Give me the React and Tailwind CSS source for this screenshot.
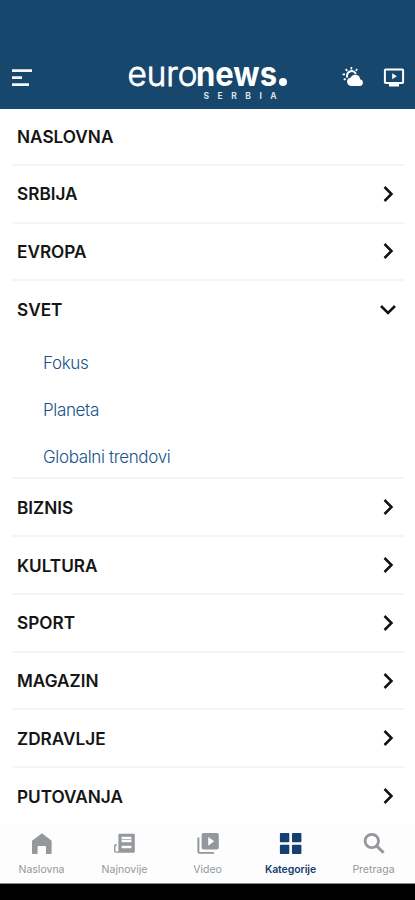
import React, { useState } from 'react';

const CATEGORIES = [
  { label: 'NASLOVNA' },
  { label: 'SRBIJA', children: [] },
  { label: 'EVROPA', children: [] },
  {
    label: 'SVET',
    children: ['Fokus', 'Planeta', 'Globalni trendovi'],
  },
  { label: 'BIZNIS', children: [] },
  { label: 'KULTURA', children: [] },
  { label: 'SPORT', children: [] },
  { label: 'MAGAZIN', children: [] },
  { label: 'ZDRAVLJE', children: [] },
  { label: 'PUTOVANJA', children: [] },
];

function MenuIcon() {
  return (
    <svg width="22" height="20" viewBox="0 0 22 20" fill="none" stroke="#f4f7ff" strokeWidth="2.6">
      <path d="M1 2.6h20M1 9.6h10M1 16.6h17" />
    </svg>
  );
}

function Logo() {
  return (
    <svg width="164" height="54" viewBox="0 -12 164 54" fill="#fff" className="font-[Inter,sans-serif]">
      <text x="0.5" y="26.6" fontSize="33.5" fontWeight="300" stroke="#fff" strokeWidth="0.8" textLength="70" lengthAdjust="spacingAndGlyphs">euro</text>
      <text x="69" y="26.6" fontSize="33.5" fontWeight="700" textLength="81" lengthAdjust="spacingAndGlyphs">news</text>
      <circle cx="156" cy="23" r="4" />
      <text x="76.5" y="39.8" fontSize="8.5" fontWeight="700" letterSpacing="8.5" fillOpacity="0.85">SERBIA</text>
    </svg>
  );
}

function WeatherIcon() {
  return (
    <svg width="24" height="22" viewBox="0 0 24 22" fill="none">
      <path d="M6.4 11.6a4.5 4.5 0 0 1 8.4-3.8" stroke="#fff" strokeWidth="2" />
      <path d="M10.4 1v2.4M4.6 3.2l1.7 1.7M16.2 3l-1.5 1.7M1.6 8.4H4M2.8 13.8l1.9-1.1" stroke="#fff" strokeWidth="1.7" />
      <path d="M10 20a4.2 4.2 0 0 1-.6-8.3 5.2 5.2 0 0 1 9.8 1.5 3.5 3.5 0 0 1 .2 6.8z" fill="#fff" />
    </svg>
  );
}

function TvIcon() {
  return (
    <svg width="22" height="20" viewBox="0 0 22 20" fill="none">
      <rect x="1.9" y="1.4" width="18.2" height="13.6" rx="0.8" stroke="#fff" strokeWidth="2" />
      <path d="M6 16h10v2.4H6zM9.2 5.2l4.6 3-4.6 3z" fill="#fff" />
    </svg>
  );
}

function Chevron({ open }) {
  return (
    <svg width="18" height="18" viewBox="0 0 18 18" fill="none" stroke="#111" strokeWidth="2.5">
      <path d={open ? 'M2 6l7 7 7-7' : 'M5.5 2l7 7-7 7'} />
    </svg>
  );
}

function HomeIcon() {
  return (
    <svg width="24" height="24" viewBox="0 0 24 24" fill="currentColor">
      <path d="M12 1.2 2 8.8v12.4q0 .8.8.8h4.8v-7.2q0-.8.8-.8h6.8q.8 0 .8.8V22h4.8q.8 0 .8-.8V8.8z" />
    </svg>
  );
}

function NewsIcon() {
  return (
    <svg width="24" height="24" viewBox="0 0 24 24" fill="none" stroke="currentColor">
      <path fill="currentColor" stroke="none" fillRule="evenodd" d="M6.4 1.8h14.4q1 0 1 1v17q0 1-1 1H6.4q-1 0-1-1v-17q0-1 1-1zm2.2 3v5.4h9.8V4.800zm0 8.900v2.600h9.800v-2.600z" />
      <path d="M8.600 7.500h9.800" strokeWidth="0.7" />
      <path d="M2.800 12v1.500H1.800v5.400q0 1.200 1.200 1.200h3" strokeWidth="1.4" />
    </svg>
  );
}

function VideoIcon() {
  return (
    <svg width="24" height="24" viewBox="0 0 24 24" fill="currentColor">
      <path fillRule="evenodd" d="M7.6 1h13.2q2 0 2 2v12.6q0 2-2 2H7.6q-2 0-2-2V3q0-2 2-2zm4.6 3.9v8.8l6-4.4z" />
      <path d="M1.4 5.4v14.4q0 2 2 2H18v-1.9H3.4V5.4z" />
    </svg>
  );
}

function GridIcon() {
  return (
    <svg width="24" height="24" viewBox="0 0 24 24" fill="currentColor">
      <rect x="0.9" y="1" width="9.4" height="9.2" rx="0.8" />
      <rect x="13" y="1" width="9.4" height="9.2" rx="0.8" />
      <rect x="0.9" y="12.8" width="9.4" height="9.2" rx="0.8" />
      <rect x="13" y="12.8" width="9.4" height="9.2" rx="0.8" />
    </svg>
  );
}

function SearchIcon() {
  return (
    <svg width="24" height="24" viewBox="0 0 24 24" fill="none" stroke="currentColor" strokeWidth="2.8">
      <circle cx="9.8" cy="9" r="6.7" />
      <path d="M14.4 13.6l7.2 7.2" strokeWidth="3" />
    </svg>
  );
}

const TABS = [
  { label: 'Naslovna', icon: HomeIcon },
  { label: 'Najnovije', icon: NewsIcon },
  { label: 'Video', icon: VideoIcon },
  { label: 'Kategorije', icon: GridIcon },
  { label: 'Pretraga', icon: SearchIcon },
];

export default function App() {
  const [open, setOpen] = useState('SVET');
  const [tab, setTab] = useState('Kategorije');

  return (
    <div className="flex h-[900px] w-full flex-col overflow-hidden bg-black font-[Inter,sans-serif]">
      {/* Header */}
      <header className="flex h-[109px] shrink-0 items-end bg-[#17476d] pr-[10px] pb-[8px] pl-[11px]">
        <button className="mb-[13px]"><MenuIcon /></button>
        <div className="ml-[94px]"><Logo /></div>
        <div className="mb-[13px] ml-auto flex items-end gap-[18px]">
          <WeatherIcon />
          <TvIcon />
        </div>
      </header>

      {/* Categories */}
      <main className="min-h-0 flex-1 overflow-hidden bg-white pr-[10px] pl-3">
        {CATEGORIES.map((c, i) => (
          <section key={c.label} className={i < CATEGORIES.length - 1 ? 'border-b-2 border-[#f5f5f5]' : ''}>
            <button
              onClick={() => setOpen(open === c.label ? null : c.label)}
              className={`flex w-full items-center justify-between pr-2 pl-[5px] text-[17.2px] font-semibold text-[#151515] ${i === 0 ? 'h-[54.8px]' : 'h-[55.75px]'}`}
            >
              <span className="pt-px">{c.label}</span>
              {c.children && <Chevron open={open === c.label} />}
            </button>
            {open === c.label && c.children && (
              <ul className="pl-[31px] text-[17px] font-light tracking-[-0.35px] text-[#17528a]">
                {c.children.map(name => (
                  <li key={name} className="flex h-[46.8px] items-center pt-[7px]">{name}</li>
                ))}
              </ul>
            )}
          </section>
        ))}
      </main>

      {/* Bottom tabs */}
      <nav className="flex h-[60px] shrink-0 border-b border-[#8a8a8a] bg-[#fdfdfd] pt-2">
        {TABS.map(({ label, icon: Icon }) => (
          <button
            key={label}
            onClick={() => setTab(label)}
            className={`flex flex-1 flex-col items-center gap-1.5 text-[10.5px] leading-4 ${tab === label ? 'font-semibold tracking-[-0.1px] text-[#14406f]' : 'text-[#94989c]'}`}
          >
            <Icon />
            <span>{label}</span>
          </button>
        ))}
      </nav>
      <div className="h-4 shrink-0 bg-black" />
    </div>
  );
}
